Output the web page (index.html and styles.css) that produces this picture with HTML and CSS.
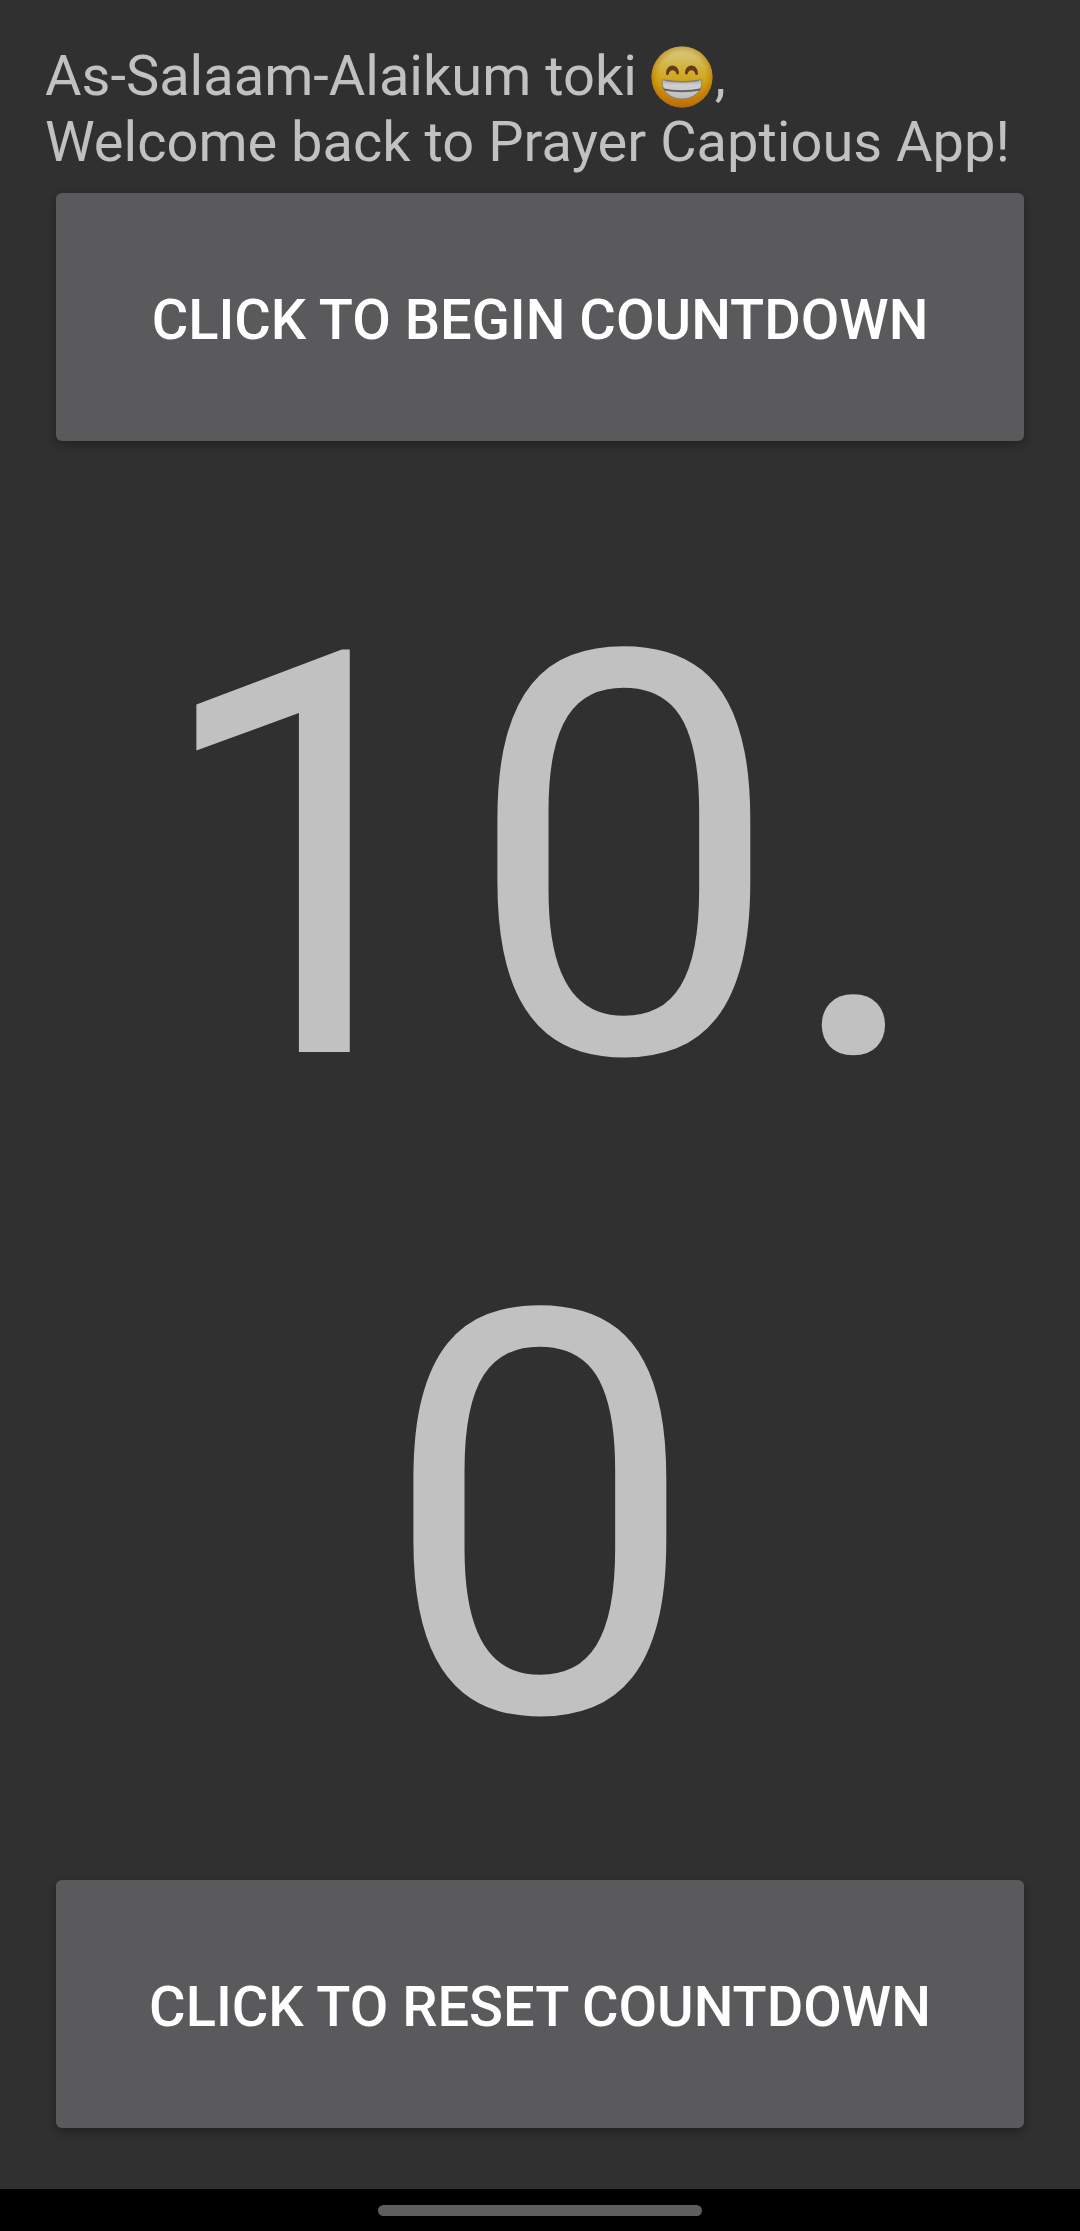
FILE: index.html
```html
<!DOCTYPE html>
<html lang="en">
<head>
  <meta charset="utf-8">
  <meta name="viewport" content="width=device-width, initial-scale=1">
  <title>Prayer Captious App</title>
  <link rel="stylesheet" href="styles.css">
</head>
<body>
  <main class="screen">
    <p class="greeting">As-Salaam-Alaikum toki <svg class="emoji" viewBox="0 0 64 64" role="img" aria-label="Beaming face">
        <defs>
          <linearGradient id="face" x1="0" y1="0" x2="0" y2="1">
            <stop offset="0" stop-color="#d9ca91"/>
            <stop offset=".3" stop-color="#d2b746"/>
            <stop offset=".6" stop-color="#d2a010"/>
            <stop offset=".85" stop-color="#cb7c0e"/>
            <stop offset="1" stop-color="#bb640c"/>
          </linearGradient>
          <radialGradient id="rim" cx=".5" cy=".48" r=".52">
            <stop offset=".72" stop-color="#c58a05" stop-opacity="0"/>
            <stop offset="1" stop-color="#b07005" stop-opacity=".75"/>
          </radialGradient>
          <linearGradient id="teeth" x1="0" y1="0" x2="0" y2="1">
            <stop offset="0" stop-color="#a9a9aa"/>
            <stop offset=".3" stop-color="#d0d0d1"/>
            <stop offset="1" stop-color="#bcbcbd"/>
          </linearGradient>
        </defs>
        <circle cx="31" cy="32" r="30.500" fill="url(#face)"/>
        <circle cx="31" cy="32" r="30.500" fill="url(#rim)"/>
        <path d="M15.200 29.500c-.8-5 2.500-9 6.300-9s7.100 4 6.300 8.500c-1.300 1.200-2.300.4-2.600-.7-.6-2-2-3-3.700-3s-3.200 1.500-3.700 3.500c-.3 1.200-1.700 1.800-2.600.7z" fill="#653a1b"/>
        <path d="M34.200 29c-.8-4.500 2.500-8.500 6.300-8.500s7.100 4 6.300 9c-.9 1.100-2.300.5-2.600-.7-.5-2-2-3.500-3.700-3.500s-3.100 1-3.700 3c-.3 1.100-1.300 1.900-2.600.7z" fill="#653a1b"/>
        <path d="M11 36.500c0-1.500.9-2 2.200-1.700 11.600 2.200 24 2.200 35.600 0 1.300-.3 2.200.2 2.200 1.700C51 47 42 54 31 54S11 47 11 36.500z" fill="url(#teeth)" stroke="#8d8060" stroke-width="1"/>
        <path d="M12 43.200c12 2.600 26 2.600 38 0l-1.200 2.300c-11 2.200-24.600 2.200-35.600 0z" fill="#606268"/>
        <path d="M14 35.500c11 2 23 2 34 0" fill="none" stroke="#77787b" stroke-width="1"/>
      </svg>,<br>Welcome back to Prayer Captious App!</p>
    <button class="action" type="button">CLICK TO BEGIN COUNTDOWN</button>
    <div class="countdown" role="timer">10.0</div>
    <button class="action" type="button">CLICK TO RESET COUNTDOWN</button>
  </main>
  <footer class="navbar"><span class="handle"></span></footer>
</body>
</html>
```
FILE: styles.css
```css
* {
  box-sizing: border-box;
}

body {
  margin: 0;
  min-height: 100vh;
  display: flex;
  flex-direction: column;
  background: #303030;
  color: #c1c1c1;
  font-family: Roboto, "Noto Sans", sans-serif;
}

.screen {
  flex: 1;
  display: flex;
  flex-direction: column;
  padding: 43px 45px 61px;
}

.greeting {
  margin: 0 0 18px;
  font-size: 56px;
  line-height: 66px;
}

.emoji {
  width: 64px;
  height: 64px;
  margin: -16px 0;
  vertical-align: 2px;
}

.action {
  height: 248px;
  margin: 0 11px;
  padding: 5px 0 0;
  border: 0;
  border-radius: 6px;
  background: #5a5a5c;
  box-shadow: 0 4px 10px rgba(0, 0, 0, 0.3);
  color: #fff;
  font: 500 56px/66px Roboto, "Noto Sans", sans-serif;
}

.countdown {
  flex: 1;
  padding: 89px 0 32px;
  font-size: 563px;
  line-height: 659px;
  text-align: center;
  word-break: break-all;
}

.navbar {
  display: flex;
  justify-content: center;
  align-items: center;
  height: 42px;
  background: #000;
}

.handle {
  width: 30%;
  height: 11px;
  border-radius: 6px;
  background: #5e5e5e;
}
```
